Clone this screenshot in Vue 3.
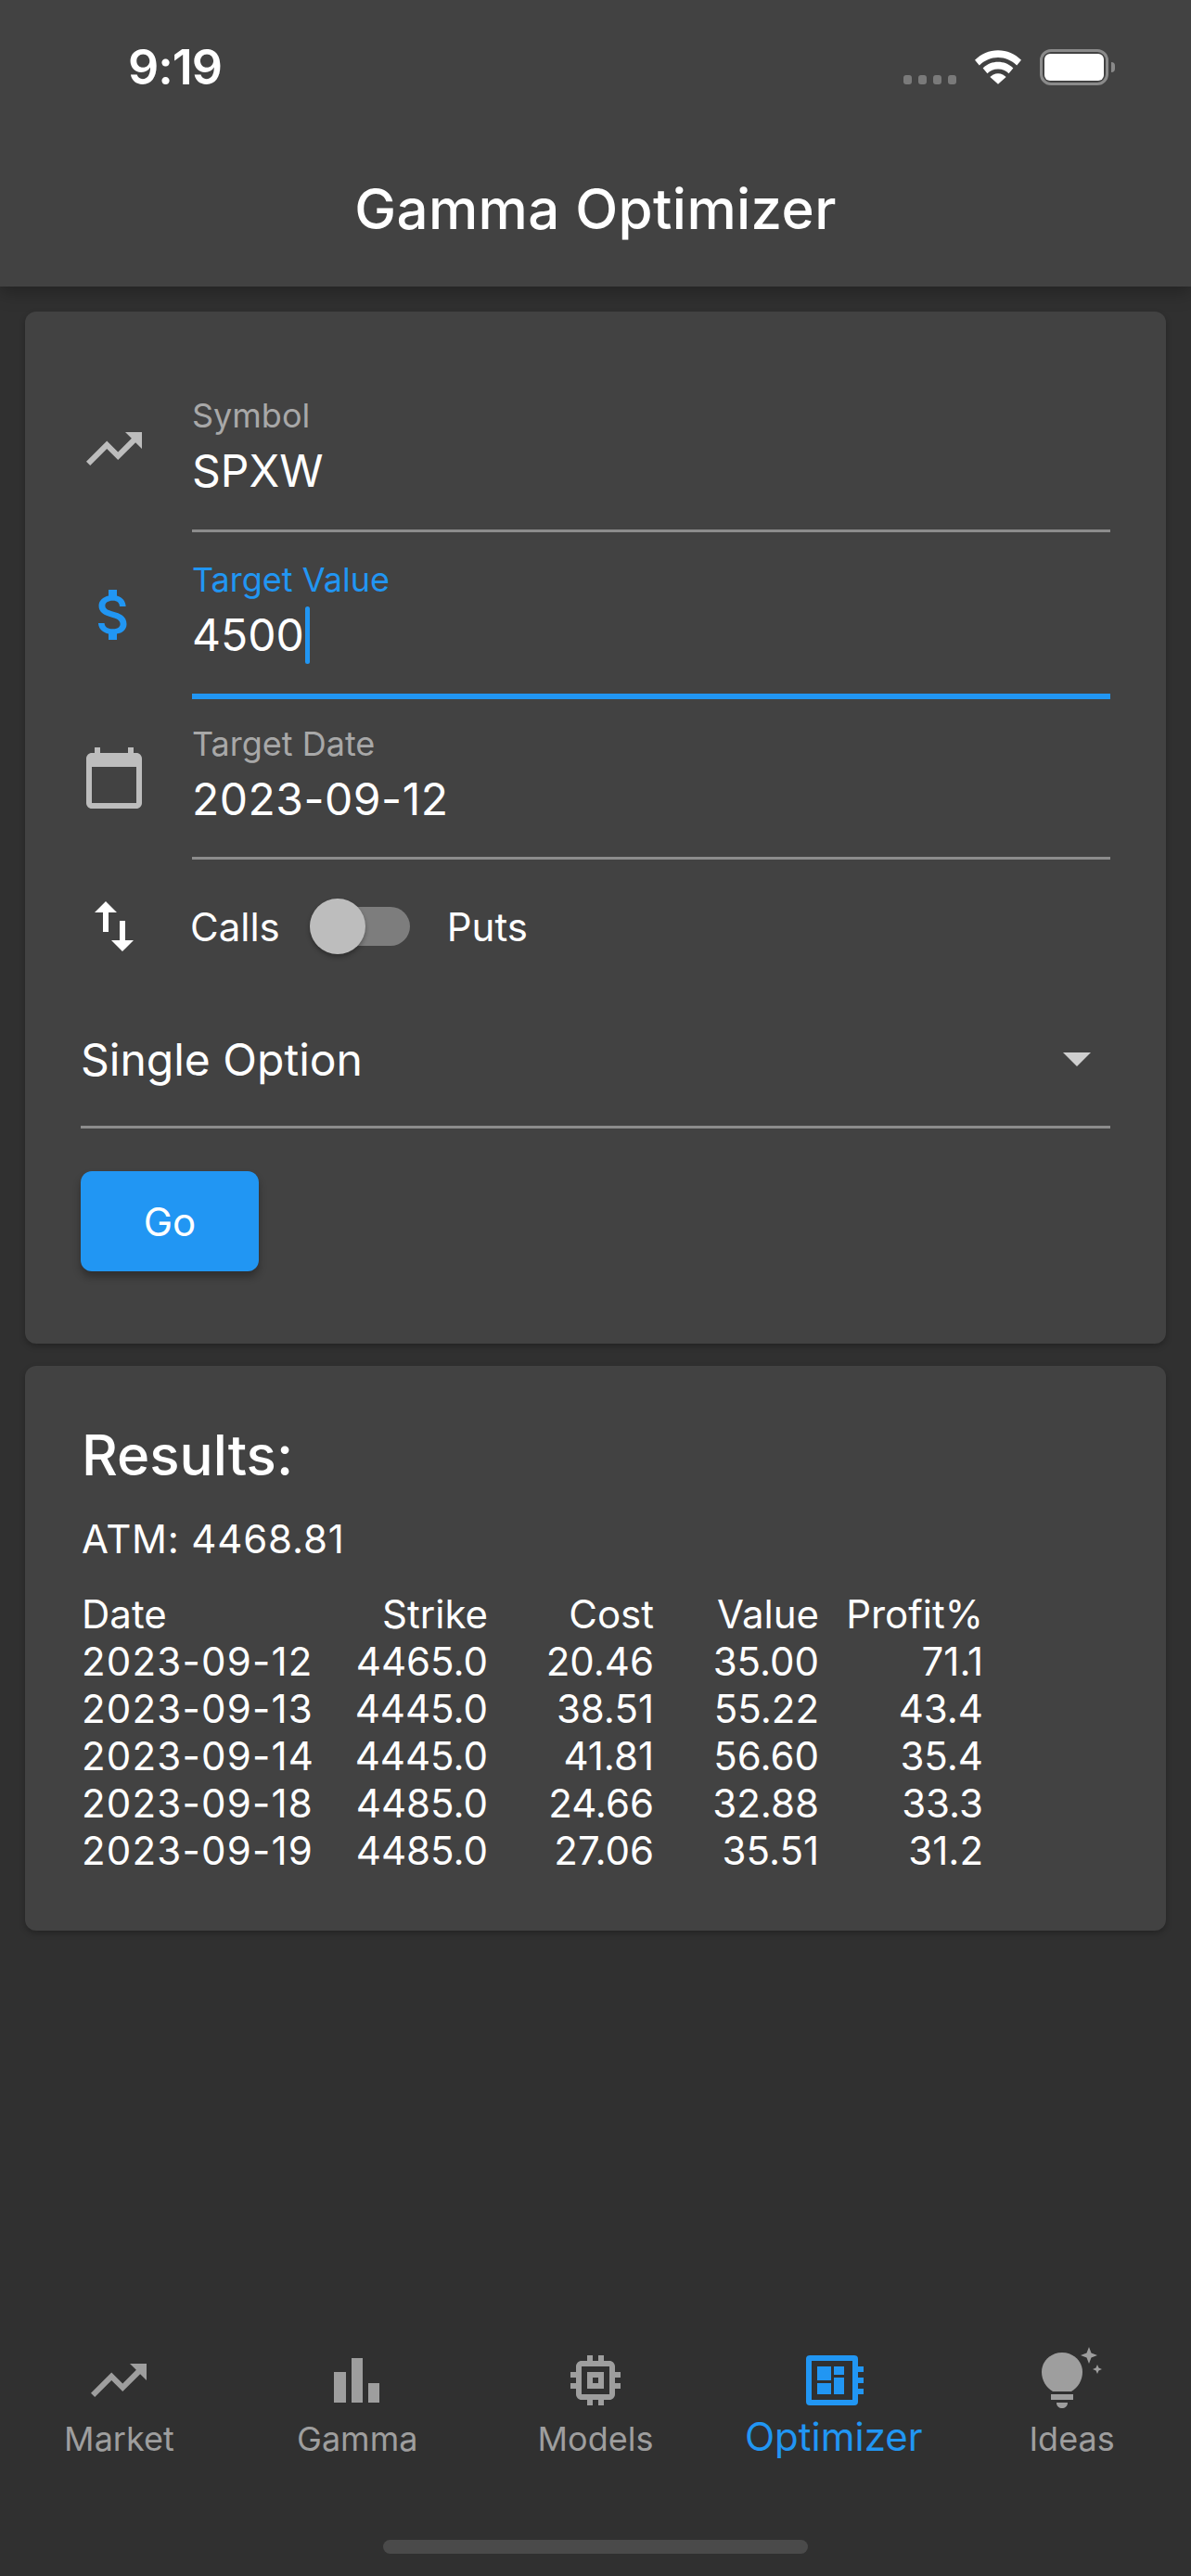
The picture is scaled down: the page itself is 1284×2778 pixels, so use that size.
<template>
	<div class="screen">
		<header class="app-bar">
			<div class="status-bar">
				<span class="clock">9:19</span>
				<div class="status-icons">
					<div class="signal">
						<i v-for="n in 4" :key="n"></i>
					</div>
					<svg class="wifi" width="50" height="37" viewBox="0 0 52 38">
						<path d="M26 0C16 0 7 4 0 11l5 6c6-6 13-9 21-9s15 3 21 9l5-6C45 4 36 0 26 0z" fill="#fff" />
						<path d="M26 13c-6 0-12 2-17 7l5 6c3-3 7-5 12-5s9 2 12 5l5-6c-5-5-11-7-17-7z" fill="#fff" />
						<path d="M17 30l9 8 9-8c-2-2-5-4-9-4s-7 2-9 4z" fill="#fff" />
					</svg>
					<div class="battery">
						<div class="battery-fill"></div>
					</div>
				</div>
			</div>
			<h1 class="title">Gamma Optimizer</h1>
		</header>

		<main class="content">
			<section class="card form-card">
				<div class="field">
					<svg class="icon field-icon" viewBox="0 0 24 24">
						<path d="M16 6l2.29 2.29-4.88 4.88-4-4L2 16.59 3.41 18l6-6 4 4 6.3-6.29L22 12V6z" />
					</svg>
					<div class="field-body">
						<label>Symbol</label>
						<div class="value">SPXW</div>
					</div>
				</div>
				<div class="field active">
					<svg class="icon field-icon" viewBox="0 0 24 24">
						<path d="M11.8 10.9c-2.27-.59-3-1.2-3-2.15 0-1.09 1.01-1.85 2.7-1.85 1.78 0 2.44.85 2.5 2.1h2.21c-.07-1.72-1.12-3.3-3.21-3.81V3h-3v2.16c-1.94.42-3.5 1.68-3.5 3.61 0 2.31 1.91 3.46 4.7 4.13 2.5.6 3 1.48 3 2.41 0 .69-.49 1.79-2.7 1.79-2.06 0-2.87-.92-2.98-2.1h-2.2c.12 2.19 1.76 3.42 3.68 3.83V21h3v-2.15c1.95-.37 3.5-1.5 3.5-3.55 0-2.84-2.43-3.81-4.7-4.4z" />
					</svg>
					<div class="field-body">
						<label>Target Value</label>
						<div class="value">4500<span class="caret"></span></div>
					</div>
				</div>
				<div class="field date-field">
					<svg class="icon field-icon" viewBox="0 0 24 24">
						<path d="M20 3h-1V1h-2v2H7V1H5v2H4c-1.1 0-2 .9-2 2v16c0 1.1.9 2 2 2h16c1.1 0 2-.9 2-2V5c0-1.1-.9-2-2-2zm0 18H4V8h16v13z" />
					</svg>
					<div class="field-body">
						<label>Target Date</label>
						<div class="value">2023-09-12</div>
					</div>
				</div>

				<div class="type-row">
					<svg class="icon swap-icon" viewBox="0 0 24 24">
						<path d="M16 17.01V10h-2v7.01h-3L15 21l4-3.99h-3zM9 3L5 6.99h3V14h2V6.99h3L9 3z" />
					</svg>
					<span class="type-label">Calls</span>
					<div class="switch">
						<div class="switch-thumb"></div>
					</div>
					<span class="type-label">Puts</span>
				</div>

				<div class="dropdown">
					<span>Single Option</span>
					<span class="dropdown-arrow"></span>
				</div>

				<button class="go-btn">Go</button>
			</section>

			<section class="card results-card">
				<h2>Results:</h2>
				<p class="atm">ATM: 4468.81</p>
				<div class="table">
					<span v-for="h in headers" :key="h">{{ h }}</span>
					<template v-for="row in rows" :key="row[0]">
						<span v-for="(cell, i) in row" :key="i" :class="{ date: i === 0 }">{{ cell }}</span>
					</template>
				</div>
			</section>
		</main>

		<nav class="tabs">
			<div class="tab">
				<svg class="tab-icon" viewBox="0 0 24 24">
					<path d="M16 6l2.29 2.29-4.88 4.88-4-4L2 16.59 3.41 18l6-6 4 4 6.3-6.29L22 12V6z" />
				</svg>
				<span>Market</span>
			</div>
			<div class="tab">
				<svg class="tab-icon" viewBox="0 0 72 72">
					<path d="M11 27h13v33H11zM30 12h12v48H30zM48 39h12v21H48z" />
				</svg>
				<span>Gamma</span>
			</div>
			<div class="tab">
				<svg class="tab-icon" viewBox="0 0 24 24">
					<path d="M15 9H9v6h6V9zm-2 4h-2v-2h2v2zm8-2V9h-2V7c0-1.1-.9-2-2-2h-2V3h-2v2h-2V3H9v2H7c-1.1 0-2 .9-2 2v2H3v2h2v2H3v2h2v2c0 1.1.9 2 2 2h2v2h2v-2h2v2h2v-2h2c1.1 0 2-.9 2-2v-2h2v-2h-2v-2h2zm-4 6H7V7h10v10z" />
				</svg>
				<span>Models</span>
			</div>
			<div class="tab selected">
				<svg class="tab-icon" viewBox="0 0 72 72">
					<path fill-rule="evenodd" d="M10 9h48a4 4 0 0 1 4 4v46a4 4 0 0 1-4 4H10a4 4 0 0 1-4-4V13a4 4 0 0 1 4-4zm2 6v42h44V15z" />
					<path d="M18 21h15v15H18zM36 21h11v9H36zM18 39h15v12H18zM36 33h11v18H36zM62 21h6v6h-6zM62 33h6v6h-6zM62 45h6v6h-6z" />
				</svg>
				<span>Optimizer</span>
			</div>
			<div class="tab">
				<svg class="tab-icon" viewBox="0 0 72 72">
					<path d="M25 6c12 0 22 9 22 21 0 9-5 17-12 21H15C8 44 3 36 3 27 3 15 13 6 25 6z" />
					<path d="M13 51h24v6H13zM19 60h12c0 4-3 6-6 6s-6-2-6-6z" />
					<path d="M54 0l2.500 6.500L63 9l-6.500 2.500L54 18l-2.500-6.500L45 9l6.500-2.500z" />
					<path d="M63 19l1.500 3.500L68 24l-3.500 1.500L63 29l-1.500-3.500L58 24l3.500-1.500z" />
				</svg>
				<span>Ideas</span>
			</div>
		</nav>
		<div class="home-indicator"></div>
	</div>
</template>

<script setup>
const headers = ['Date', 'Strike', 'Cost', 'Value', 'Profit%']

const rows = [
	['2023-09-12', '4465.0', '20.46', '35.00', '71.1'],
	['2023-09-13', '4445.0', '38.51', '55.22', '43.4'],
	['2023-09-14', '4445.0', '41.81', '56.60', '35.4'],
	['2023-09-18', '4485.0', '24.66', '32.88', '33.3'],
	['2023-09-19', '4485.0', '27.06', '35.51', '31.2']
]
</script>

<style>
body {
	background: #303030;
}
</style>

<style scoped>
.screen {
	position: relative;
	width: 1284px;
	height: 2778px;
	display: flex;
	flex-direction: column;
	overflow: hidden;
	background: #303030;
	color: #fff;
	font-family: Inter, "Liberation Sans", sans-serif;
}

.app-bar {
	position: relative;
	z-index: 2;
	height: 309px;
	flex: none;
	background: #424242;
	box-shadow: 0 6px 18px rgba(0, 0, 0, .28);
}

.status-bar {
	height: 189px;
	display: flex;
	justify-content: space-between;
	padding: 0 89px 0 138px;
}

.clock {
	margin-top: 48px;
	font-size: 52px;
	line-height: 50px;
	font-weight: 600;
	letter-spacing: -1px;
}

.status-icons {
	display: flex;
	align-items: flex-end;
	height: 92px;
}

.signal {
	display: flex;
	gap: 7px;
	margin-right: 20px;
}

.signal i {
	width: 9px;
	height: 10px;
	margin-bottom: 1px;
	border-radius: 3px;
	background: #7a7a7a;
}

.wifi {
	margin-bottom: 1px;
	margin-right: 20px;
}

.battery {
	position: relative;
	width: 74px;
	height: 39px;
	box-sizing: border-box;
	padding: 2px;
	border: 3px solid #8a8a8a;
	border-radius: 12px;
}

.battery::after {
	content: "";
	position: absolute;
	right: -10px;
	top: 11px;
	width: 4px;
	height: 11px;
	border-radius: 0 4px 4px 0;
	background: #8a8a8a;
}

.battery-fill {
	height: 100%;
	border-radius: 6px;
	background: #fff;
}

.title {
	margin: 0;
	text-align: center;
	font-size: 60px;
	line-height: 72px;
	font-weight: 500;
	letter-spacing: .4px;
}

.content {
	flex: 1;
	display: flex;
	flex-direction: column;
	gap: 24px;
	padding: 27px 27px 0;
}

.card {
	border-radius: 12px;
	background: #424242;
	box-shadow: 0 3px 6px rgba(0, 0, 0, .25);
}

.form-card {
	height: 1113px;
	box-sizing: border-box;
	padding: 60px 60px 0;
}

.icon {
	fill: #bdbdbd;
}

.field {
	display: flex;
	align-items: center;
	gap: 48px;
	height: 178px;
}

.field-icon {
	width: 72px;
	height: 72px;
	flex: none;
	margin-top: -3px;
}

.field-body {
	flex: 1;
	height: 100%;
	box-sizing: border-box;
	border-bottom: 3px solid #8c8c8c;
	padding-top: 31px;
}

.field-body label {
	display: block;
	font-size: 36px;
	line-height: 42px;
	color: #a8a8a8;
}

.value {
	display: flex;
	align-items: center;
	margin-top: 9px;
	font-size: 48px;
	line-height: 60px;
}

.caret {
	width: 5px;
	height: 62px;
	margin-left: 1px;
	border-radius: 3px;
	background: #2196f3;
}

.active {
	height: 180px;
}

.active .field-icon {
	fill: #2196f3;
}

.active label {
	color: #2196f3;
}

.active .field-body {
	padding-top: 30px;
	border-bottom: 6px solid #2196f3;
}

.active .value {
	margin-top: 8px;
}

.date-field {
	height: 173px;
}

.date-field .field-body {
	padding-top: 27px;
}

.date-field .value {
	letter-spacing: .5px;
}

.type-row {
	display: flex;
	align-items: center;
	height: 144px;
}

.swap-icon {
	width: 72px;
	height: 72px;
	margin-right: 46px;
	fill: #fff;
}

.type-label {
	font-size: 42px;
}

.switch {
	position: relative;
	width: 108px;
	height: 42px;
	margin: 0 40px 0 32px;
	border-radius: 21px;
	background: #7d7d7d;
}

.switch-thumb {
	position: absolute;
	left: 0;
	top: -9px;
	width: 60px;
	height: 60px;
	border-radius: 50%;
	background: #bdbdbd;
	box-shadow: 0 3px 5px rgba(0, 0, 0, .3);
}

.dropdown {
	display: flex;
	align-items: center;
	justify-content: space-between;
	height: 146px;
	box-sizing: border-box;
	padding-right: 21px;
	border-bottom: 3px solid #8c8c8c;
	font-size: 48px;
}

.dropdown-arrow {
	width: 0;
	height: 0;
	border-left: 15px solid transparent;
	border-right: 15px solid transparent;
	border-top: 15px solid #cfcfcf;
}

.go-btn {
	display: block;
	width: 192px;
	height: 108px;
	margin-top: 46px;
	padding: 0;
	border: none;
	border-radius: 12px;
	background: #2196f3;
	color: #fff;
	font-family: inherit;
	font-size: 42px;
	box-shadow: 0 6px 9px rgba(0, 0, 0, .3);
}

.results-card {
	height: 609px;
	box-sizing: border-box;
	padding: 60px 61px 0;
}

.results-card h2 {
	margin: 0;
	font-size: 60px;
	line-height: 72px;
	font-weight: 500;
}

.atm {
	margin: 29px 0 0;
	font-size: 42px;
	line-height: 51px;
	letter-spacing: .8px;
}

.table {
	display: grid;
	grid-template-columns: 260px 178px 179px 178px 177px;
	margin-top: 30px;
	font-size: 42px;
	line-height: 51px;
	white-space: nowrap;
}

.table span:not(:nth-child(5n + 1)) {
	text-align: right;
}

.table .date {
	letter-spacing: 1.2px;
}

.tabs {
	position: absolute;
	left: 0;
	right: 0;
	top: 2531px;
	display: grid;
	grid-template-columns: repeat(5, 1fr);
}

.tab {
	display: flex;
	flex-direction: column;
	align-items: center;
	color: #9e9e9e;
	font-size: 36px;
	line-height: 42px;
}

.tab-icon {
	width: 72px;
	height: 72px;
	margin-bottom: 6px;
	fill: #9e9e9e;
}

.selected {
	color: #2196f3;
	font-size: 42px;
}

.selected .tab-icon {
	margin-bottom: 4px;
	fill: #2196f3;
}

.home-indicator {
	position: absolute;
	left: 413px;
	top: 2739px;
	width: 458px;
	height: 15px;
	border-radius: 8px;
	background: #4a4a4a;
}
</style>
